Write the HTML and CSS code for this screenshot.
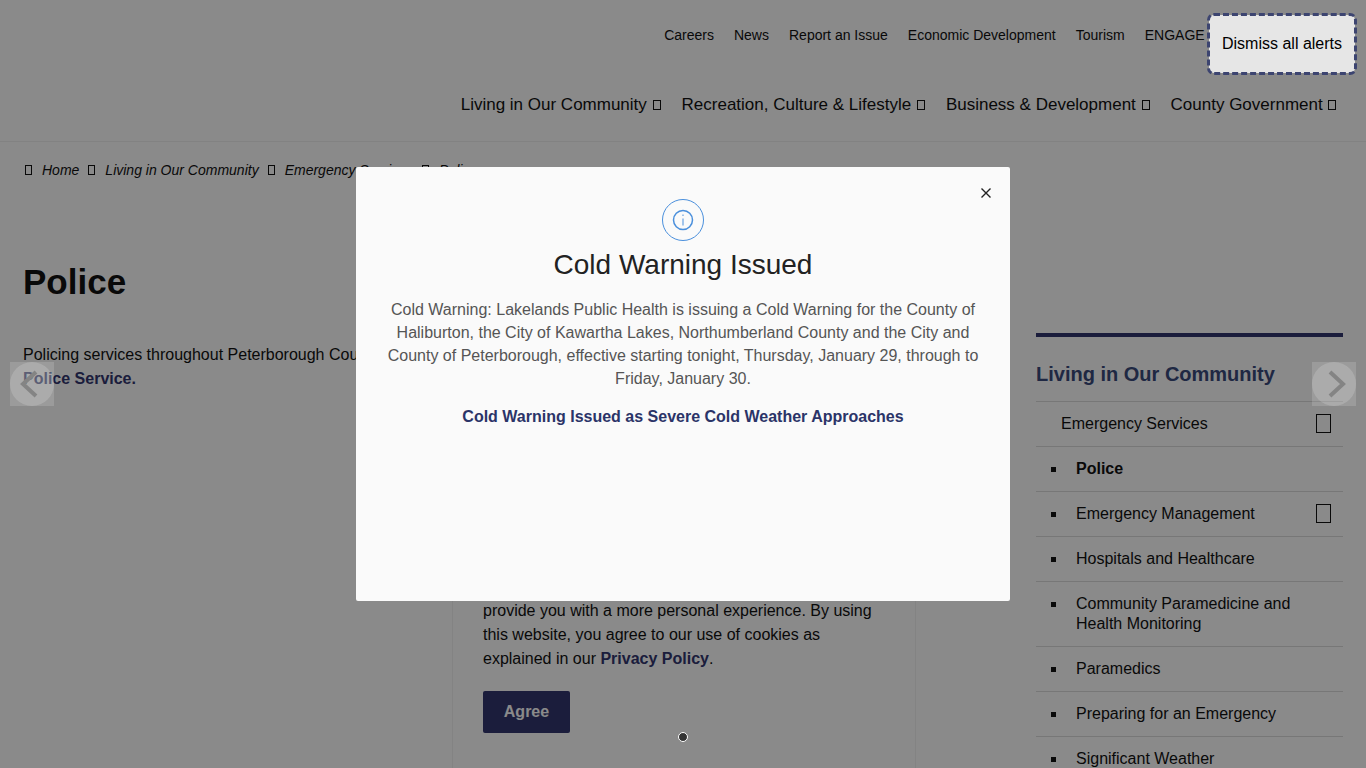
FILE: index.html
```html
<!DOCTYPE html>
<html>
  <head>
    <meta charset="utf-8" />
    <title>Police</title>
    <link rel="stylesheet" href="styles.css">
  </head>
  <body>
    <header class="site-header">
      <nav class="top-nav">
        <a>Careers</a>
        <a>News</a>
        <a>Report an Issue</a>
        <a>Economic Development</a>
        <a>Tourism</a>
        <a>ENGAGE</a>
      </nav>
      <nav class="main-nav">
        <a>Living in Our Community <span class="tofu"></span></a>
        <a>Recreation, Culture &amp; Lifestyle <span class="tofu"></span></a>
        <a>Business &amp; Development <span class="tofu"></span></a>
        <a>County Government <span class="tofu"></span></a>
      </nav>
    </header>

    <div class="breadcrumb">
      <span class="tofu"></span><a>Home</a>
      <span class="tofu"></span><a>Living in Our Community</a>
      <span class="tofu"></span><a>Emergency Services</a>
      <span class="tofu"></span><a>Police</a>
    </div>

    <main class="layout">
      <section class="content">
        <h1>Police</h1>
        <p>
          Policing services throughout Peterborough County are provided by the
          Peterborough<br>
          <a class="strong-link">Police Service.</a>
        </p>
      </section>

      <aside class="sidebar">
        <h2>Living in Our Community</h2>
        <ul class="side-list">
          <li class="plain">Emergency Services <span class="tofu-big"></span></li>
          <li class="current">Police</li>
          <li>Emergency Management <span class="tofu-big"></span></li>
          <li>Hospitals and Healthcare</li>
          <li>Community Paramedicine and Health Monitoring</li>
          <li>Paramedics</li>
          <li>Preparing for an Emergency</li>
          <li>Significant Weather</li>
        </ul>
      </aside>
    </main>

    <div class="cookie-card">
      <p>
        We use cookies to improve how this website works and
        provide you with a more personal experience. By using this website, you
        agree to our use of cookies as explained in our
        <a class="strong-link">Privacy Policy</a>.
      </p>
      <button class="agree">Agree</button>
    </div>

    <div class="overlay"></div>

    <button class="arrow arrow-left" aria-label="Previous">
      <svg width="44" height="44" viewBox="0 0 44 44"><path d="M26 10 L13 22 L26 34" /></svg>
    </button>
    <button class="arrow arrow-right" aria-label="Next">
      <svg width="44" height="44" viewBox="0 0 44 44"><path d="M18 10 L31 22 L18 34" /></svg>
    </button>

    <button class="dismiss">Dismiss all alerts</button>

    <div class="modal">
      <button class="modal-close" aria-label="Close">
        <svg width="10" height="10" viewBox="0 0 10 10"><path d="M0.5 0.5 L9.5 9.5 M9.5 0.5 L0.5 9.5" /></svg>
      </button>
      <svg class="modal-icon" width="42" height="42" viewBox="0 0 42 42">
        <circle cx="21" cy="21" r="20.5" />
        <circle class="thick" cx="21" cy="21" r="9.5" />
        <path d="M21 19.5 V26.5" />
        <path d="M21 15.5 V17" />
      </svg>
      <h2>Cold Warning Issued</h2>
      <p>
        Cold Warning: Lakelands Public Health is issuing a Cold Warning for the
        County of Haliburton, the City of Kawartha Lakes, Northumberland County
        and the City and County of Peterborough, effective starting tonight,
        Thursday, January 29, through to Friday, January 30.
      </p>
      <a class="modal-link">Cold Warning Issued as Severe Cold Weather Approaches</a>
    </div>

    <span class="pager-dot"></span>
  </body>
</html>
```

FILE: styles.css
```css
html,
body {
  height: 768px;
  overflow: hidden;
}
body {
  margin: 0;
  position: relative;
  background: #fff;
  color: #111;
  font-family: "Liberation Sans", Arial, sans-serif;
  font-size: 16px;
}
.site-header {
  height: 142px;
  border-bottom: 1px solid #f0f0f0;
  box-sizing: border-box;
}
.top-nav {
  display: flex;
  justify-content: flex-end;
  gap: 20px;
  padding: 27px 161.4px 0 0;
  font-size: 14px;
  line-height: 16px;
}
.main-nav {
  display: flex;
  justify-content: flex-end;
  gap: 20px;
  padding: 52px 28.6px 0 0;
  font-size: 17px;
  line-height: 20px;
}
.tofu {
  display: inline-block;
  width: 6px;
  height: 8px;
  margin: 0 1px;
  border: 1px solid #111;
}
.tofu-big {
  position: absolute;
  top: 12px;
  right: 12px;
  width: 13px;
  height: 17px;
  border: 1px solid #111;
}
.breadcrumb {
  display: flex;
  align-items: center;
  padding: 20px 0 0 25px;
  font-size: 14px;
  line-height: 16px;
  font-style: italic;
  white-space: nowrap;
}
.breadcrumb .tofu {
  width: 5px;
  margin: 0;
}
.breadcrumb a {
  margin: 0 9px 0 10px;
}
.layout {
  display: flex;
  justify-content: space-between;
  padding: 0 23px;
}
.content {
  width: 960px;
}
h1 {
  margin: 82px 0 0;
  font-size: 35px;
  line-height: 44px;
}
.content p {
  margin: 39px 0 0;
  line-height: 24px;
}
.strong-link {
  font-weight: bold;
  color: #323670;
}
.sidebar {
  width: 307px;
  margin-top: 155px;
  border-top: 4px solid #323670;
}
.sidebar h2 {
  margin: 0;
  padding: 26px 0 15px;
  font-size: 20px;
  line-height: 23px;
  color: #3a4a7c;
}
.side-list {
  margin: 0;
  padding: 0;
  list-style: none;
}
.side-list li {
  position: relative;
  padding: 12px 40px 12px 40px;
  line-height: 20px;
  border-top: 1px solid #ddd;
}
.side-list li::before {
  content: "";
  position: absolute;
  left: 15px;
  top: 20px;
  width: 5px;
  height: 5px;
  background: #111;
}
.side-list li.plain {
  padding-left: 25px;
}
.side-list li.plain::before {
  display: none;
}
.side-list li.current {
  font-weight: bold;
}
.cookie-card {
  position: absolute;
  left: 452px;
  top: 540px;
  width: 402px;
  height: 300px;
  padding: 34px 30px;
  border: 1px solid #f2f2f2;
  background: #fff;
}
.cookie-card p {
  margin: 0;
  line-height: 24px;
}
.agree {
  display: block;
  width: 87px;
  height: 42px;
  margin-top: 20px;
  border: none;
  border-radius: 2px;
  background: #323670;
  color: #fff;
  font-family: inherit;
  font-size: 16px;
  font-weight: bold;
}
.overlay {
  position: absolute;
  inset: 0;
  background: rgba(0, 0, 0, 0.46);
}
.arrow {
  position: absolute;
  top: 362px;
  width: 44px;
  height: 44px;
  padding: 0;
  border: none;
  background: rgba(255, 255, 255, 0.15);
}
.arrow::before {
  content: "";
  position: absolute;
  inset: 0;
  border-radius: 50%;
  background: rgba(255, 255, 255, 0.17);
}
.arrow svg {
  position: relative;
  display: block;
}
.arrow path {
  fill: none;
  stroke: #848484;
  stroke-width: 4;
}
.arrow-left {
  left: 10px;
}
.arrow-right {
  left: 1312px;
}
.dismiss {
  position: absolute;
  left: 1209px;
  top: 15px;
  width: 146px;
  height: 58px;
  padding: 0;
  border: none;
  border-radius: 5px;
  outline: 3px dashed #3c4470;
  outline-offset: -1px;
  background: #e6e6e6;
  color: #000;
  font-family: inherit;
  font-size: 16px;
}
.modal {
  position: absolute;
  left: 356px;
  top: 167px;
  width: 654px;
  height: 434px;
  border-radius: 2px;
  background: #fafafa;
  text-align: center;
}
.modal-close {
  position: absolute;
  top: 21px;
  right: 19px;
  width: 10px;
  height: 10px;
  padding: 0;
  border: none;
  background: none;
}
.modal-close svg {
  display: block;
}
.modal-close path {
  stroke: #222;
  stroke-width: 1.4;
}
.modal-icon {
  display: block;
  margin: 32px auto 0;
}
.modal-icon circle,
.modal-icon path {
  fill: none;
  stroke: #4a8fdc;
  stroke-width: 1;
}
.modal-icon .thick {
  stroke-width: 1.5;
}
.modal h2 {
  margin: 7px 0 0;
  font-size: 28px;
  font-weight: normal;
  line-height: 34px;
  color: #222;
}
.modal p {
  margin: 16px auto 0;
  width: 600px;
  color: #555;
  line-height: 23px;
}
.modal-link {
  display: block;
  margin-top: 15px;
  font-weight: bold;
  line-height: 23px;
  color: #2b3468;
}
.pager-dot {
  position: absolute;
  left: 678px;
  top: 732px;
  width: 8px;
  height: 8px;
  border: 1px solid #fff;
  border-radius: 50%;
  background: #333;
}
```
